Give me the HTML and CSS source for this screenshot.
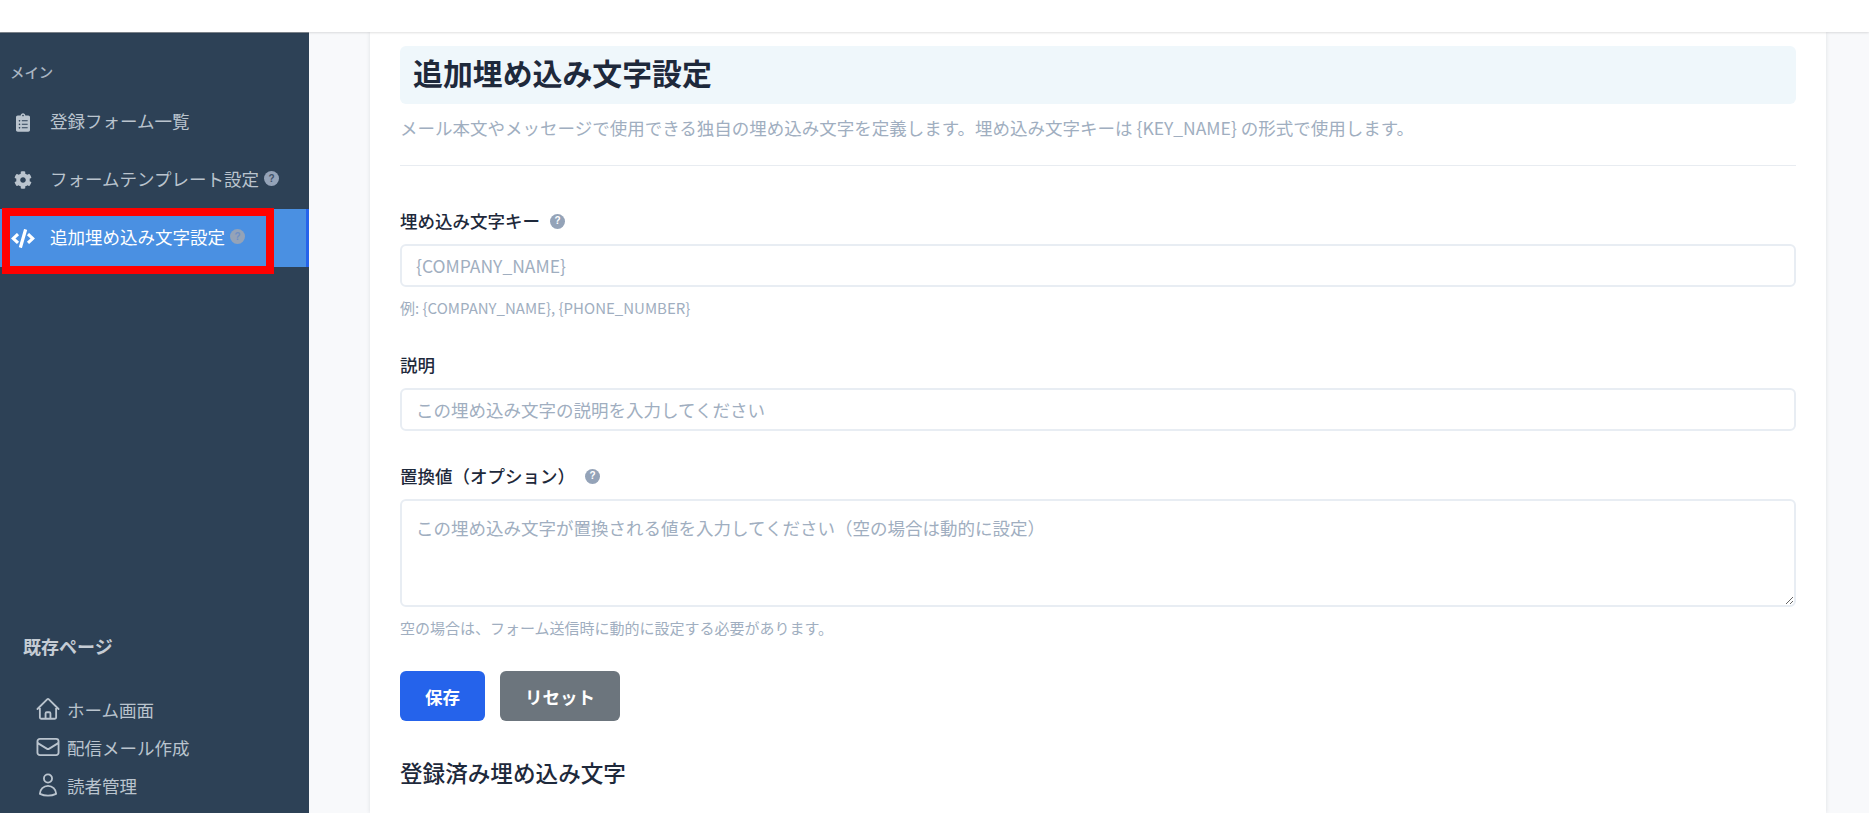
FILE: index.html
```html
<!DOCTYPE html>
<html lang="ja">
<head>
<meta charset="utf-8">
<title>追加埋め込み文字設定</title>
<link rel="stylesheet" href="styles.css">
</head>
<body>
<header class="topbar"></header>
<div class="layout">
  <aside class="sidebar">
    <div class="side-label">メイン</div>
    <nav class="side-nav">
      <a class="nav-item">
        <span class="nav-icon"><svg class="ico-clip" viewBox="0 0 384 512"><path fill="currentColor" d="M336 64h-80c0-35.300-28.700-64-64-64s-64 28.700-64 64H48C21.500 64 0 85.500 0 112v352c0 26.500 21.500 48 48 48h288c26.500 0 48-21.500 48-48V112c0-26.500-21.500-48-48-48zM96 424c-13.300 0-24-10.700-24-24s10.700-24 24-24 24 10.700 24 24-10.700 24-24 24zm0-96c-13.300 0-24-10.700-24-24s10.700-24 24-24 24 10.700 24 24-10.700 24-24 24zm0-96c-13.300 0-24-10.700-24-24s10.700-24 24-24 24 10.700 24 24-10.700 24-24 24zm96-192c13.300 0 24 10.700 24 24s-10.700 24-24 24-24-10.700-24-24 10.700-24 24-24zm128 368c0 4.400-3.600 8-8 8H168c-4.400 0-8-3.600-8-8v-16c0-4.400 3.600-8 8-8h144c4.400 0 8 3.600 8 8v16zm0-96c0 4.400-3.600 8-8 8H168c-4.400 0-8-3.600-8-8v-16c0-4.400 3.600-8 8-8h144c4.400 0 8 3.600 8 8v16zm0-96c0 4.400-3.600 8-8 8H168c-4.400 0-8-3.600-8-8v-16c0-4.400 3.600-8 8-8h144c4.400 0 8 3.600 8 8v16z"/></svg></span>
        <span>登録フォーム一覧</span>
      </a>
      <a class="nav-item">
        <span class="nav-icon"><svg class="ico-gear" viewBox="0 0 512 512"><path fill="currentColor" d="M487.400 315.700l-42.600-24.600c4.300-23.200 4.300-47 0-70.200l42.600-24.600c4.900-2.800 7.100-8.600 5.500-14-11.100-35.600-30-67.800-54.700-94.600-3.800-4.100-10-5.100-14.800-2.300L380.800 110c-17.900-15.400-38.500-27.300-60.800-35.100V25.800c0-5.600-3.900-10.500-9.400-11.700-36.700-8.200-74.300-7.800-109.200 0-5.500 1.200-9.400 6.100-9.400 11.700V75c-22.200 7.900-42.800 19.800-60.800 35.100L88.700 85.500c-4.900-2.800-11-1.900-14.800 2.300-24.700 26.700-43.600 58.900-54.700 94.600-1.700 5.400.6 11.200 5.500 14L67.300 221c-4.300 23.200-4.300 47 0 70.200l-42.600 24.600c-4.900 2.800-7.100 8.600-5.500 14 11.100 35.600 30 67.800 54.700 94.600 3.800 4.100 10 5.100 14.800 2.300l42.600-24.600c17.900 15.400 38.500 27.300 60.800 35.100v49.200c0 5.600 3.900 10.500 9.400 11.700 36.700 8.200 74.300 7.800 109.200 0 5.500-1.200 9.400-6.100 9.400-11.700v-49.200c22.200-7.900 42.800-19.800 60.800-35.100l42.600 24.600c4.900 2.800 11 1.900 14.800-2.300 24.700-26.700 43.600-58.900 54.700-94.600 1.500-5.500-.7-11.300-5.600-14.100zM256 336c-44.100 0-80-35.900-80-80s35.900-80 80-80 80 35.900 80 80-35.900 80-80 80z"/></svg></span>
        <span>フォームテンプレート設定</span>
        <span class="help help-side">?</span>
      </a>
      <a class="nav-item active">
        <span class="nav-icon"><svg class="ico-code" viewBox="0 0 640 512"><path fill="currentColor" d="M278.900 511.500l-61-17.700c-6.400-1.800-10-8.500-8.200-14.900L346.200 8.700c1.800-6.400 8.500-10 14.900-8.200l61 17.700c6.400 1.800 10 8.500 8.200 14.900L293.800 503.300c-1.900 6.400-8.500 10.100-14.900 8.200zm-114-112.200l43.500-46.400c4.600-4.900 4.300-12.700-.8-17.200L117 256l90.600-79.700c5.100-4.500 5.500-12.300.8-17.200l-43.500-46.400c-4.500-4.800-12.100-5.100-17-.5L3.800 247.200c-5.100 4.700-5.100 12.800 0 17.500l144.100 135.100c4.900 4.600 12.500 4.400 17-.5zm327.200.6l144.100-135.100c5.100-4.700 5.100-12.800 0-17.500L492.100 112.100c-4.800-4.500-12.400-4.300-17 .5L431.600 159c-4.600 4.900-4.300 12.700.8 17.200L523 256l-90.600 79.700c-5.100 4.500-5.500 12.300-.8 17.200l43.500 46.400c4.500 4.900 12.100 5.100 17 .6z"/></svg></span>
        <span>追加埋め込み文字設定</span>
        <span class="help help-active">?</span>
      </a>
    </nav>
    <div class="legacy">
      <div class="legacy-title">既存ページ</div>
      <ul class="legacy-list">
        <li class="legacy-item">
          <svg class="legacy-icon" viewBox="0 0 24 24"><path d="m2.250 12 8.954-8.955c.44-.439 1.152-.439 1.591 0L21.750 12M4.500 9.750v10.125c0 .621.504 1.125 1.125 1.125H9.750v-4.875c0-.621.504-1.125 1.125-1.125h2.250c.621 0 1.125.504 1.125 1.125V21h4.125c.621 0 1.125-.504 1.125-1.125V9.750M8.250 21h8.250"/></svg>
          <span>ホーム画面</span>
        </li>
        <li class="legacy-item">
          <svg class="legacy-icon" viewBox="0 0 24 24"><path d="M21.750 6.750v10.500a2.250 2.250 0 0 1-2.250 2.250h-15a2.250 2.250 0 0 1-2.250-2.250V6.750m19.500 0A2.250 2.250 0 0 0 19.500 4.500h-15a2.250 2.250 0 0 0-2.250 2.250m19.500 0v.243a2.250 2.250 0 0 1-1.070 1.916l-7.500 4.615a2.250 2.250 0 0 1-2.360 0L3.320 8.910a2.250 2.250 0 0 1-1.070-1.916V6.750"/></svg>
          <span>配信メール作成</span>
        </li>
        <li class="legacy-item">
          <svg class="legacy-icon" viewBox="0 0 24 24"><path d="M15.750 6a3.750 3.750 0 1 1-7.500 0 3.750 3.750 0 0 1 7.500 0ZM4.501 20.118a7.500 7.500 0 0 1 14.998 0A17.933 17.933 0 0 1 12 21.750c-2.676 0-5.216-.584-7.499-1.632Z"/></svg>
          <span>読者管理</span>
        </li>
      </ul>
    </div>
    <div class="marker"></div>
  </aside>
  <main class="main">
    <section class="card">
      <h1 class="page-title">追加埋め込み文字設定</h1>
      <p class="page-desc">メール本文やメッセージで使用できる独自の埋め込み文字を定義します。埋め込み文字キーは {KEY_NAME} の形式で使用します。</p>
      <form class="form">
        <div class="field field-key">
          <label class="label">埋め込み文字キー<span class="help help-label">?</span></label>
          <input class="control" type="text" placeholder="{COMPANY_NAME}">
          <small class="hint">例: {COMPANY_NAME}, {PHONE_NUMBER}</small>
        </div>
        <div class="field field-desc">
          <label class="label">説明</label>
          <input class="control" type="text" placeholder="この埋め込み文字の説明を入力してください">
        </div>
        <div class="field field-value">
          <label class="label">置換値（オプション）<span class="help help-label">?</span></label>
          <textarea class="control area" placeholder="この埋め込み文字が置換される値を入力してください（空の場合は動的に設定）"></textarea>
          <small class="hint">空の場合は、フォーム送信時に動的に設定する必要があります。</small>
        </div>
        <div class="actions">
          <button type="button" class="btn btn-save">保存</button>
          <button type="button" class="btn btn-reset">リセット</button>
        </div>
      </form>
      <h2 class="section-title">登録済み埋め込み文字</h2>
      <p class="section-sub">登録済みの埋め込み文字</p>
    </section>
  </main>
</div>
</body>
</html>
```
FILE: styles.css
```css
* { box-sizing: border-box; }
html, body { margin: 0; height: 100%; overflow: hidden; }
body {
  font-family: "Noto Sans CJK JP", "Noto Sans", sans-serif;
  font-size: 17.5px;
  background: #f8f9fb;
  color: #1e293b;
}
.topbar {
  height: 32px;
  background: #fff;
  box-shadow: 0 1px 2px rgba(0, 0, 0, .12);
  position: relative;
  z-index: 2;
}
.layout { display: flex; height: 781px; }
.sidebar {
  position: relative;
  width: 309px;
  flex: none;
  background: #2d4156;
  color: #bac4ce;
  padding-top: 27px;
  border-top: 1px solid #858d96;
  overflow: hidden;
}
.side-label {
  padding-left: 10px;
  font-size: 14.400px;
  line-height: 24px;
  font-weight: 500;
  color: #aab6c3;
}
.side-nav { margin-top: 9px; display: flex; flex-direction: column; }
.nav-item {
  height: 58px;
  display: flex;
  align-items: center;
  padding: 0 0 3px 10px;
  color: #bac4ce;
}
.nav-icon {
  width: 40px;
  flex: none;
  display: flex;
  align-items: center;
  margin-top: 3px;
}
.ico-clip { width: 14px; height: 19px; margin-left: 6px; }
.ico-gear { width: 18px; height: 18px; margin-left: 4px; }
.ico-code { width: 24px; height: 19px; margin-left: 1px; }
.nav-item.active {
  background: #4a90e2;
  color: #fff;
  border-right: 3px solid #2563eb;
}
.help {
  display: inline-flex;
  align-items: center;
  justify-content: center;
  width: 15px;
  height: 15px;
  border-radius: 50%;
  background: #94a3b8;
  color: #3f5168;
  font-family: "Liberation Sans", sans-serif;
  font-size: 10px;
  font-weight: 700;
  line-height: 1;
}
.help-side { margin-left: 5px; }
.help-active { margin-left: 5px; color: #6f8fc4; }
.help-label { margin-left: 10px; color: #fff; }
.legacy { padding: 0 0 0 23px; margin-top: 366px; }
.legacy-title { font-size: 18px; font-weight: 700; line-height: 26px; color: #c5ccd4; }
.legacy-list { list-style: none; margin: 31px 0 0; padding: 0 0 0 12px; }
.legacy-item {
  height: 38px;
  display: flex;
  align-items: center;
  gap: 6px;
  color: #bac4ce;
}
.legacy-icon {
  width: 26px;
  height: 26px;
  flex: none;
  fill: none;
  stroke: #bac4ce;
  stroke-width: 1.700;
  stroke-linejoin: round;
  stroke-linecap: round;
}
.marker {
  position: absolute;
  left: 2px;
  top: 175px;
  width: 272px;
  height: 66px;
  border: 8px solid #f00;
}
.main { flex: 1; padding: 0 43px 0 61px; overflow: hidden; }
.card {
  background: #fff;
  height: 100%;
  padding: 14px 30px 0;
  box-shadow: 0 0 4px rgba(30, 41, 59, .12);
}
.page-title {
  margin: 0;
  height: 58px;
  padding: 0 0 3px 13px;
  background: #eff7fb;
  border-radius: 6px;
  font-size: 29.900px;
  font-weight: 700;
  line-height: 52px;
  color: #1e293b;
}
.page-desc {
  margin: 0;
  height: 62px;
  padding-top: 10px;
  line-height: 28px;
  color: #a0aec0;
  border-bottom: 1px solid #e8ecf1;
}
.form { display: block; }
.field-key { padding-top: 41px; }
.field-desc { padding-top: 32px; }
.field-value { padding-top: 31px; }
.label {
  display: flex;
  align-items: center;
  line-height: 28px;
  font-weight: 500;
  color: #1e293b;
}
.control {
  display: block;
  width: 100%;
  height: 43px;
  margin-top: 9px;
  padding: 0 14px;
  border: 2px solid #e8edf3;
  border-radius: 6px;
  background: #fff;
  font: inherit;
  color: #1e293b;
  outline: none;
}
.control::placeholder { color: #a0aec0; opacity: 1; }
.area { height: 108px; padding: 13px 14px; resize: vertical; line-height: 28px; }
.hint {
  display: block;
  margin-top: 10px;
  font-size: 15px;
  line-height: 22px;
  color: #a0aec0;
}
.actions { display: flex; gap: 15px; padding-top: 32px; }
.btn {
  height: 50px;
  border: 0;
  border-radius: 6px;
  font: inherit;
  font-weight: 700;
  color: #fff;
}
.btn-save { width: 85px; background: #2563eb; }
.btn-reset { width: 120px; background: #6c757d; }
.section-title {
  margin: 34px 0 0;
  font-size: 22.600px;
  font-weight: 500;
  line-height: 36px;
  color: #1e293b;
}
.section-sub { margin: 22px 0 0; line-height: 26px; color: #1e293b; }
```
